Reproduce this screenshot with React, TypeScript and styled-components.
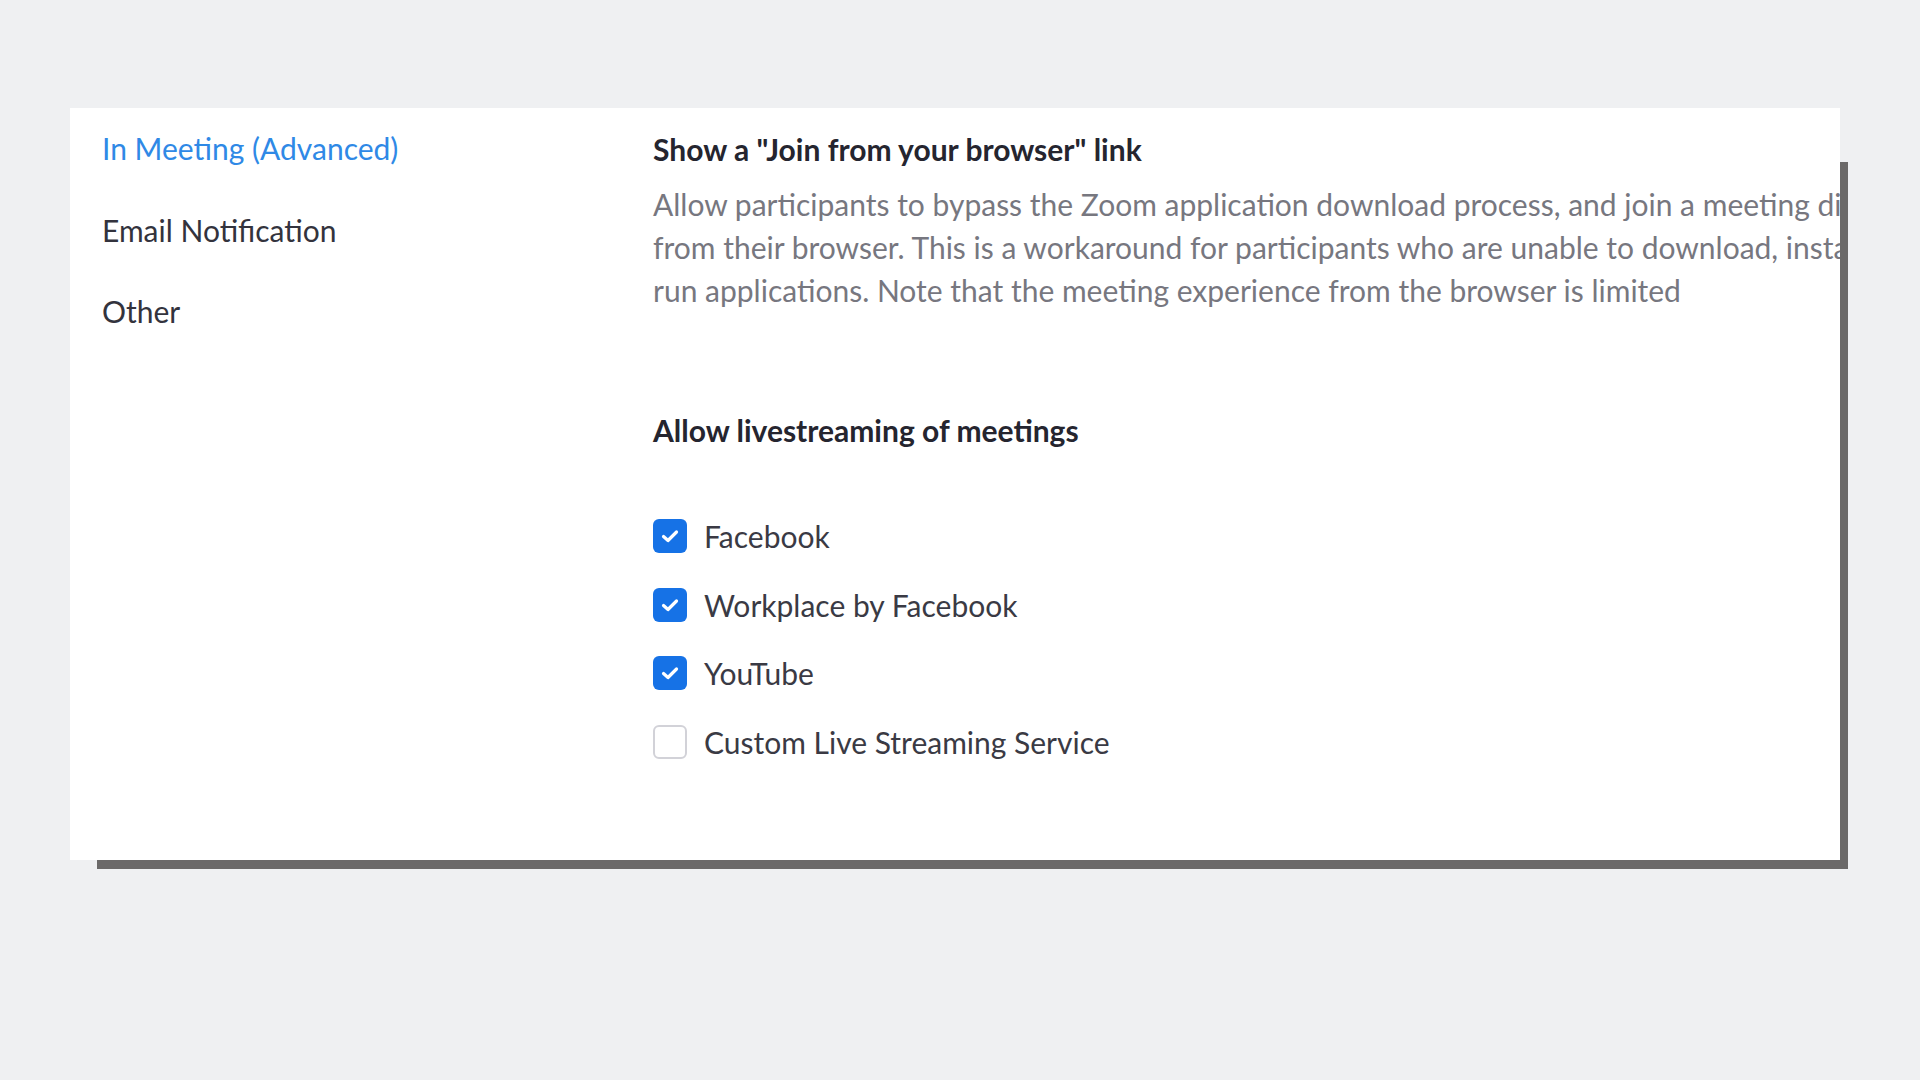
import React from "react";
import styled, { createGlobalStyle } from "styled-components";

const GlobalStyle = createGlobalStyle`
  html, body {
    margin: 0;
    padding: 0;
    background: #eff0f2;
  }
  body {
    font-family: Lato, "Noto Sans", "Liberation Sans", sans-serif;
    width: 1920px;
    height: 1080px;
    overflow: hidden;
  }
`;

const Page = styled.div`
  padding: 108px 80px 0 70px;
`;

const Frame = styled.div`
  position: relative;
  width: 1770px;
  height: 752px;
  &::before {
    content: "";
    position: absolute;
    left: 27px;
    top: 54px;
    right: -8px;
    bottom: -9px;
    background: #6b6969;
  }
`;

const Panel = styled.div`
  position: relative;
  height: 100%;
  background: #ffffff;
  overflow: hidden;
  display: grid;
  grid-template-columns: 583px 1fr;
`;

const Nav = styled.nav`
  display: flex;
  flex-direction: column;
  padding: 22px 0 0 32px;
  gap: 45.5px;
`;

const NavItem = styled.div<{ $active?: boolean }>`
  font-size: 30px;
  line-height: 36px;
  color: ${(p) => (p.$active ? "#2f89e6" : "#33333d")};
  white-space: nowrap;
`;

const Content = styled.div`
  padding-top: 23px;
  display: flex;
  flex-direction: column;
`;

const Heading = styled.div`
  font-size: 30px;
  line-height: 36px;
  font-weight: 700;
  color: #25252f;
  white-space: nowrap;
`;

const Description = styled.div`
  margin-top: 16px;
  font-size: 30px;
  line-height: 43px;
  color: #77777f;
`;

const Line = styled.span`
  display: block;
  white-space: nowrap;
`;

const Section = styled.div<{ $gap: number }>`
  margin-top: ${(p) => p.$gap}px;
`;

const OptionList = styled.div`
  margin-top: 70px;
  display: flex;
  flex-direction: column;
  gap: 32.6px;
`;

const Option = styled.label`
  display: flex;
  align-items: center;
  gap: 17px;
  height: 36px;
  font-size: 30px;
  color: #3a3a44;
  white-space: nowrap;
  cursor: pointer;
`;

const Box = styled.span<{ $checked: boolean }>`
  width: 34px;
  height: 34px;
  box-sizing: border-box;
  border-radius: 6px;
  display: flex;
  align-items: center;
  justify-content: center;
  flex-shrink: 0;
  background: ${(p) => (p.$checked ? "#1672e6" : "#ffffff")};
  border: ${(p) => (p.$checked ? "none" : "2px solid #d2d2d8")};
`;

const Check = () => (
  <svg width="24" height="24" viewBox="0 0 24 24" fill="none">
    <path
      d="M5.5 12.5 L10 16.5 L18.5 8"
      stroke="#ffffff"
      strokeWidth="3.2"
      strokeLinecap="round"
      strokeLinejoin="round"
    />
  </svg>
);

const options = [
  { label: "Facebook", checked: true },
  { label: "Workplace by Facebook", checked: true },
  { label: "YouTube", checked: true },
  { label: "Custom Live Streaming Service", checked: false },
];

export default function App() {
  return (
    <>
      <GlobalStyle />
      <Page>
        <Frame>
          <Panel>
            <Nav>
              <NavItem $active>In Meeting (Advanced)</NavItem>
              <NavItem>Email Notification</NavItem>
              <NavItem>Other</NavItem>
            </Nav>
            <Content>
              <Heading>Show a "Join from your browser" link</Heading>
              <Description>
                <Line>
                  Allow participants to bypass the Zoom application download process, and join a meeting directly
                </Line>
                <Line>
                  from their browser. This is a workaround for participants who are unable to download, install, or
                </Line>
                <Line>run applications. Note that the meeting experience from the browser is limited</Line>
              </Description>
              <Section $gap={100}>
                <Heading>Allow livestreaming of meetings</Heading>
                <OptionList>
                  {options.map((o) => (
                    <Option key={o.label}>
                      <Box $checked={o.checked}>{o.checked && <Check />}</Box>
                      {o.label}
                    </Option>
                  ))}
                </OptionList>
              </Section>
            </Content>
          </Panel>
        </Frame>
      </Page>
    </>
  );
}
